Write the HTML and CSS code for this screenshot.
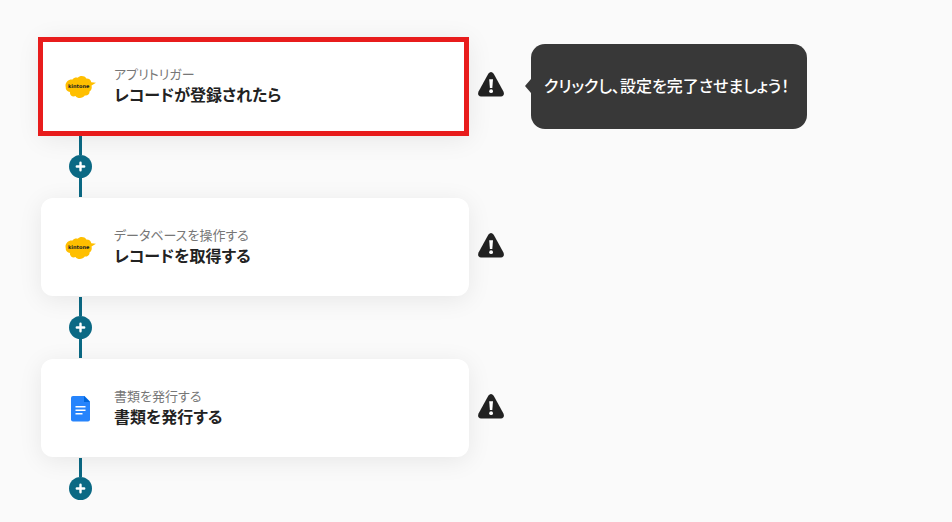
FILE: index.html
```html
<!DOCTYPE html>
<html lang="ja">
  <head>
    <meta charset="utf-8" />
    <title>フロー設定</title>
    <meta name="viewport" content="width=device-width, initial-scale=1.0" />
    <link rel="stylesheet" href="styles.css">
  </head>
  <body>
    <svg class="sprite" aria-hidden="true">
      <symbol id="warning" viewBox="0 0 26 25">
        <path fill="#222" d="M10.300 1.700Q13-1.500 15.700 1.700L25.300 19.200Q27.200 23.800 23 24.500H3Q-1.200 23.800.7 19.200Z" />
        <path fill="#fff" d="M11.200 7.200h3.800l-.7 8.800h-2.400z" />
        <circle fill="#fff" cx="13.100" cy="19.200" r="1.900" />
      </symbol>
      <symbol id="plus" viewBox="0 0 23 23">
        <path d="M11.500 7.800v7.400M7.800 11.500h7.400" fill="none" stroke="#fff" stroke-width="2.400" stroke-linecap="round" />
      </symbol>
      <symbol id="kintone" viewBox="0 0 32 24">
        <path fill="#ffbf00" d="M7.500 4.500C9 2.300 11.500 2.300 12.800 2.800C14.500.5 19.500.2 21.300 3.500C24 3.300 26 5 26.300 7.200L31 7.800L26.500 10.500C27.200 13 26.500 15.500 24.500 16.500C24.800 19 22.500 21 19.800 20.500C18 23.500 12.500 24 10.500 21C7.500 22.500 4.500 20 5 17C2 16.500.3 14.500.8 12.300C-.5 8 3 4 7.500 4.500Z" />
        <text x="3" y="13" font-family="DejaVu Sans, sans-serif" font-weight="700" font-size="5" fill="#222">kintone</text>
      </symbol>
    </svg>

    <ol class="flow">
      <li class="step">
        <div class="row">
          <button class="card selected" type="button" aria-describedby="hint">
            <svg class="logo"><use href="#kintone" /></svg>
            <span class="text">
              <span class="label">アプリトリガー</span>
              <span class="title">レコードが登録されたら</span>
            </span>
          </button>
          <svg class="warning" role="img" aria-label="警告"><use href="#warning" /></svg>
          <p class="hint" id="hint" role="tooltip">クリックし、設定を完了させましょう！</p>
        </div>
        <div class="connector">
          <button class="add" type="button" aria-label="追加"><svg><use href="#plus" /></svg></button>
        </div>
      </li>
      <li class="step">
        <div class="row">
          <button class="card" type="button">
            <svg class="logo"><use href="#kintone" /></svg>
            <span class="text">
              <span class="label">データベースを操作する</span>
              <span class="title">レコードを取得する</span>
            </span>
          </button>
          <svg class="warning" role="img" aria-label="警告"><use href="#warning" /></svg>
        </div>
        <div class="connector">
          <button class="add" type="button" aria-label="追加"><svg><use href="#plus" /></svg></button>
        </div>
      </li>
      <li class="step">
        <div class="row">
          <button class="card" type="button">
            <svg class="logo document" viewBox="0 0 32 28">
              <path fill="#2684fc" d="M8 1H19.500l5.500 5.500v18a2 2 0 0 1-2 2h-15a2 2 0 0 1-2-2V3a2 2 0 0 1 2-2z" />
              <path fill="#0066da" d="M19 1l6 6h-6z" />
              <path stroke="#fff" stroke-width="1.500" d="M10.500 11.800h10M10.500 15.300h10M10.500 18.800h7" />
            </svg>
            <span class="text">
              <span class="label">書類を発行する</span>
              <span class="title">書類を発行する</span>
            </span>
          </button>
          <svg class="warning" role="img" aria-label="警告"><use href="#warning" /></svg>
        </div>
        <div class="connector">
          <button class="add" type="button" aria-label="追加"><svg><use href="#plus" /></svg></button>
        </div>
      </li>
    </ol>
  </body>
</html>
```

FILE: styles.css
```css
body {
  margin: 0;
  background: #fafafa;
  color: #222;
  font-family: "Noto Sans CJK JP", sans-serif;
  font-feature-settings: "palt";
}

button {
  border: none;
  padding: 0;
  color: inherit;
  font: inherit;
  font-feature-settings: inherit;
  cursor: pointer;
}

.sprite {
  display: none;
}

.flow {
  list-style: none;
  margin: 0;
  padding: 37px 40px 0 41px;
}

.row {
  display: flex;
  align-items: center;
}

.card {
  position: relative;
  display: flex;
  align-items: center;
  gap: 17px;
  flex: 0 1 428px;
  padding: 28px 24px 30px;
  background: #fff;
  border-radius: 12px;
  box-shadow: 0 4px 24px rgba(0, 0, 0, 0.08);
  text-align: left;
}

/* square frame around the step being set up */
.card.selected::after {
  content: "";
  position: absolute;
  inset: 0 0 -1px -3px;
  border: 5px solid #e81c1c;
}

.card.selected {
  border-radius: 0;
}

.logo {
  flex: none;
  width: 32px;
  height: 24px;
  margin-top: 4px;
}

.logo.document {
  height: 28px;
}

.label,
.title {
  display: block;
}

.label {
  color: #777;
  font-size: 13px;
  line-height: 18px;
}

.title {
  font-size: 16px;
  font-weight: 700;
  line-height: 22px;
}

.warning {
  flex: none;
  width: 26px;
  height: 25px;
  margin: 0 27px 4px 9px;
}

.hint {
  position: relative;
  margin: 0;
  padding: 29px 18px 31px 13px;
  background: #383838;
  border-radius: 14px;
  color: #fff;
  font-size: 16px;
  font-weight: 500;
  line-height: 25px;
}

.hint::before {
  content: "";
  position: absolute;
  top: 50%;
  left: -6px;
  margin-top: -7px;
  border: 7px solid transparent;
  border-left: none;
  border-right: 6px solid #383838;
}

.connector {
  display: flex;
  flex-direction: column;
  align-items: center;
  width: 79px;
  padding: 1px 0;
}

.connector::before,
.connector::after {
  content: "";
  width: 3px;
  height: 19px;
  background: #0b6984;
}

.step:last-child .connector::after {
  display: none;
}

.add {
  width: 23px;
  height: 23px;
  border-radius: 50%;
  background: #0b6984;
}

.add svg {
  display: block;
  width: 23px;
  height: 23px;
}
```
